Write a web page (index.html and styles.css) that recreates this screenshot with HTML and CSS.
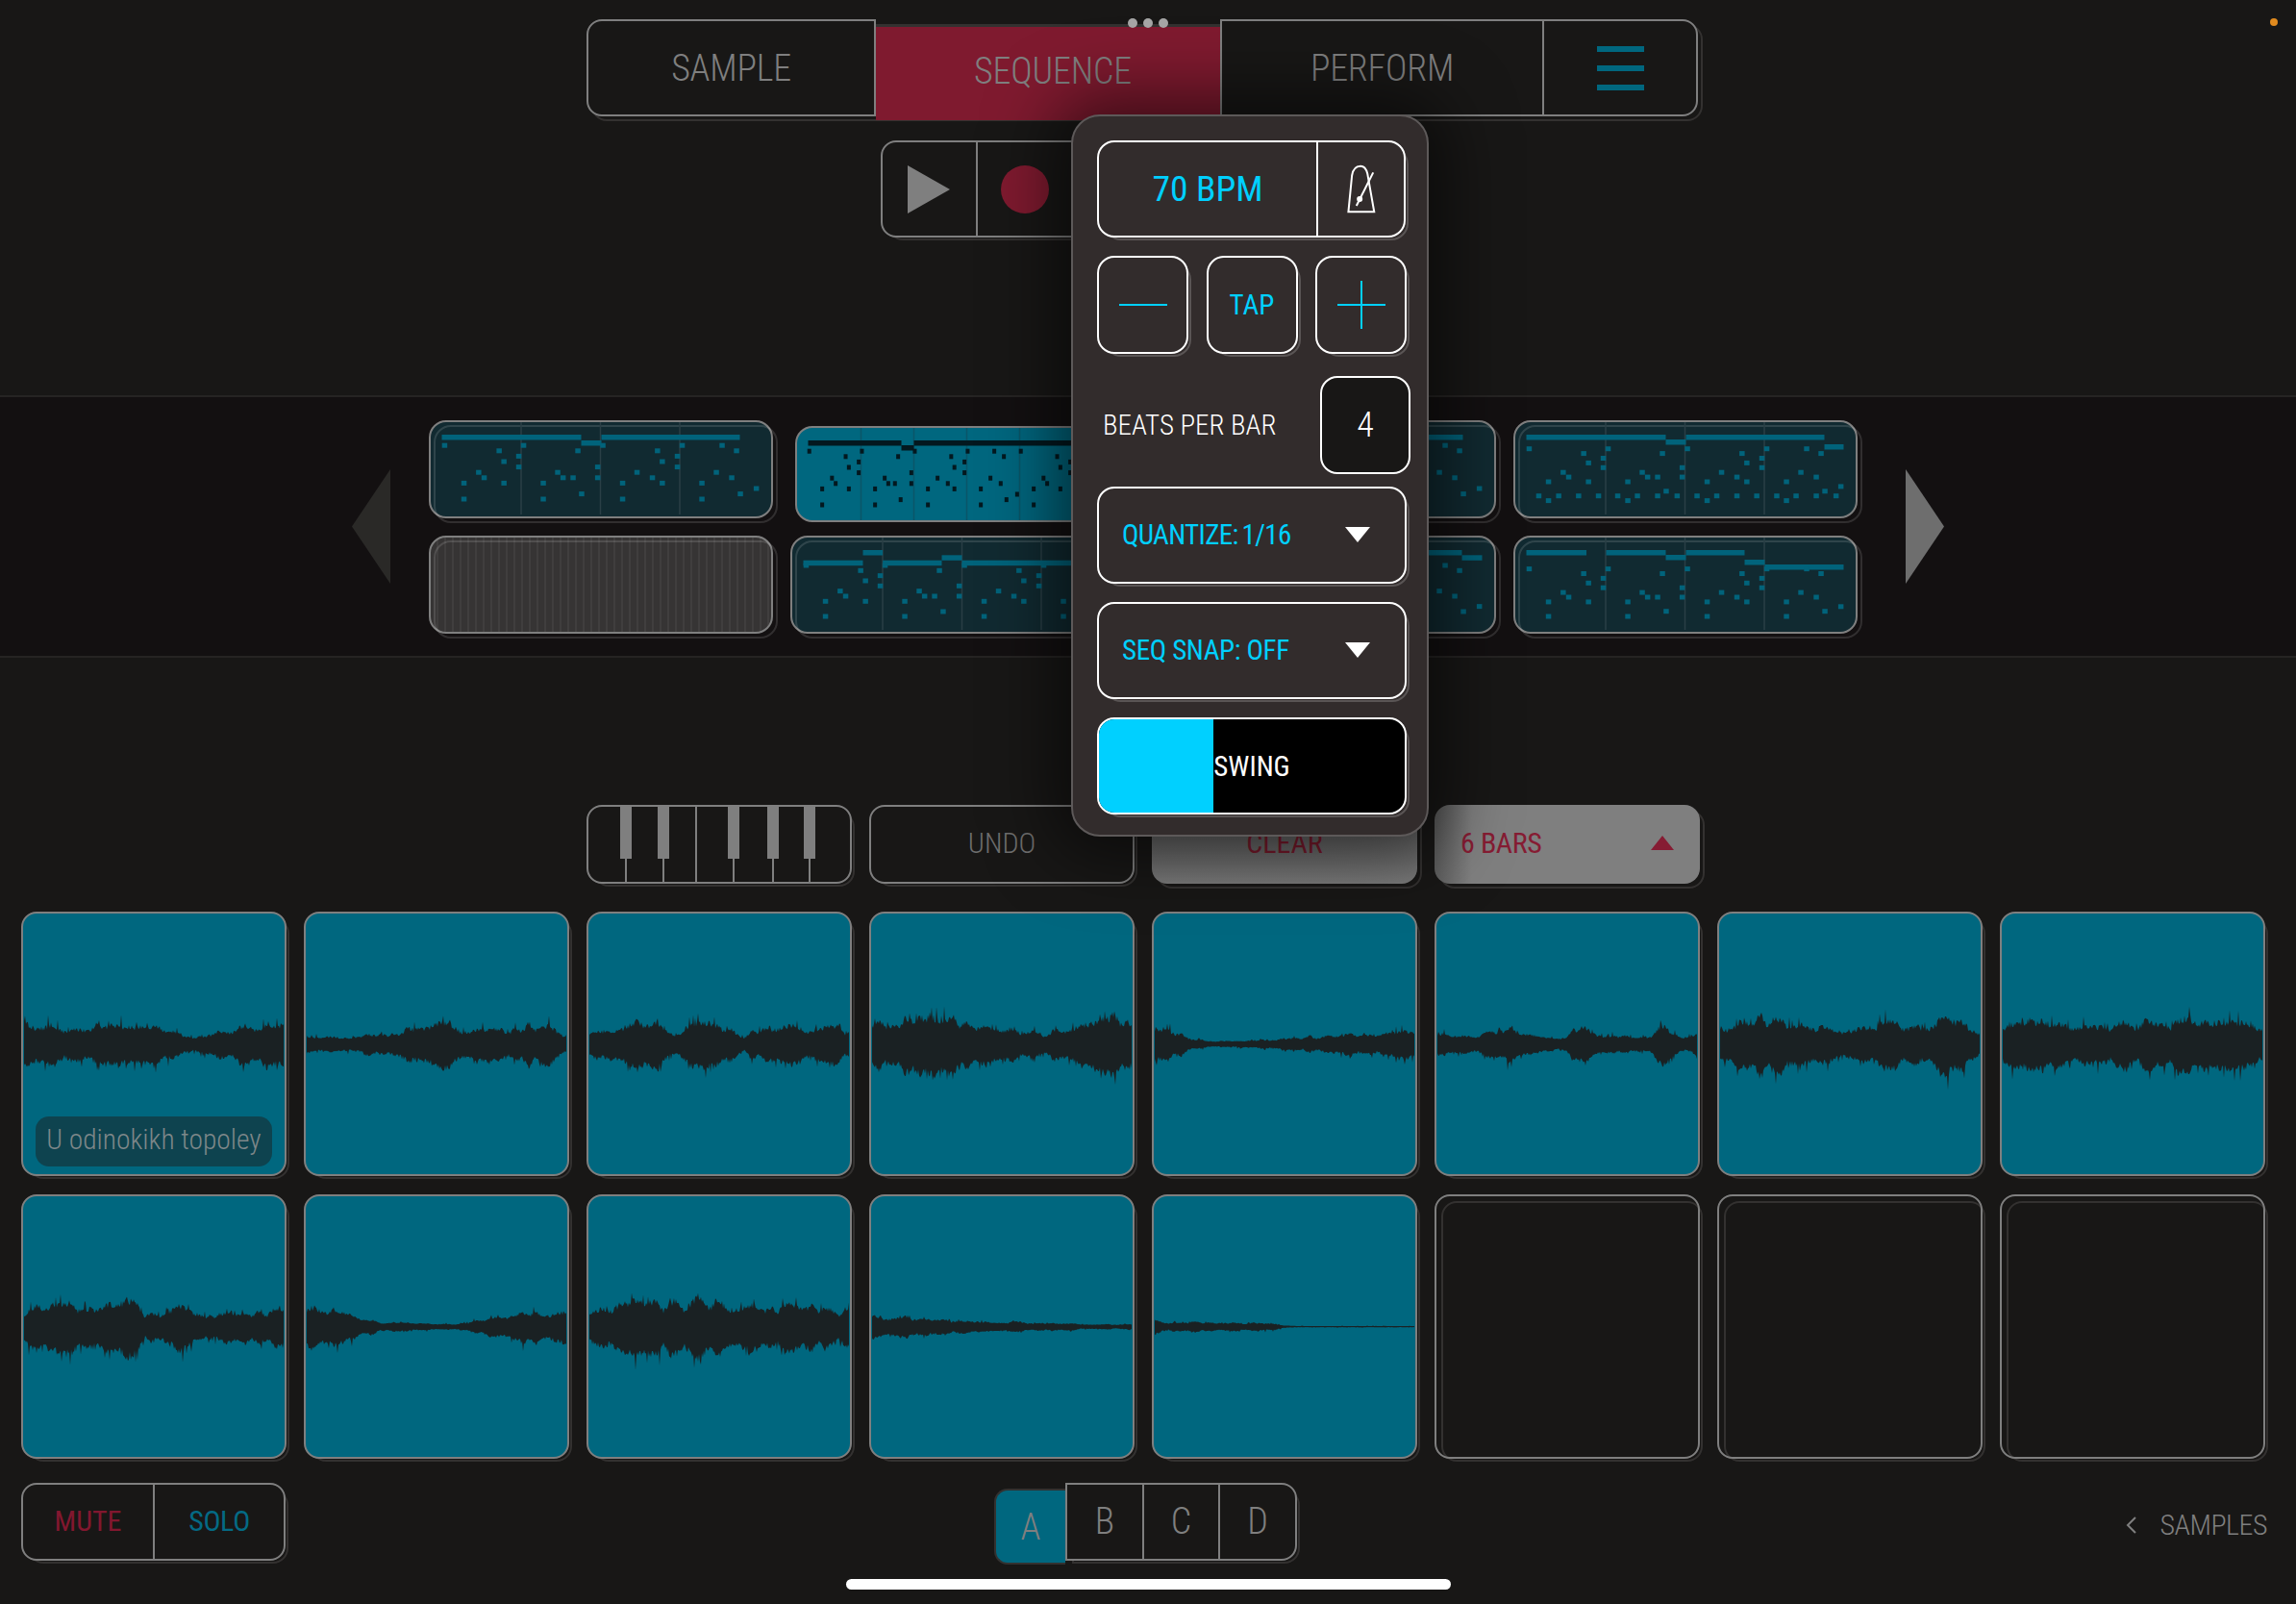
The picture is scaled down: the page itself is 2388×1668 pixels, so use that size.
FILE: index.html
```html
<!DOCTYPE html>
<html lang="en">
<head>
<meta charset="utf-8">
<title>Sequencer</title>
<link rel="stylesheet" href="styles.css">
</head>
<body>
<div class="app">
  <nav class="tabs ring">
    <div class="tab tab-first"><span class="txt">SAMPLE</span></div>
    <div class="tab tab-active"><span class="txt">SEQUENCE</span></div>
    <div class="tab tab-perform"><span class="txt">PERFORM</span></div>
    <div class="tab tab-menu"><i class="burger"></i><i class="burger"></i><i class="burger"></i></div>
  </nav>

  <div class="transport ring">
    <div class="transport-cell">
      <svg class="play" viewBox="0 0 44 50"><polygon points="0,0 44,25 0,50"/></svg>
    </div>
    <div class="transport-cell transport-rec"><i class="rec"></i></div>
  </div>

  <section class="strip">
    <svg class="arrow arrow-left" viewBox="0 0 40 119"><polygon points="40,0 0,59.5 40,119"/></svg>
    <div class="tiles">
      <div class="tile" data-tile="a"></div>
      <div class="tile tile-selected" data-tile="selected"></div>
      <div class="tile" data-tile="a"></div>
      <div class="tile" data-tile="d"></div>
      <div class="tile tile-blank"></div>
      <div class="tile" data-tile="e"></div>
      <div class="tile" data-tile="f"></div>
      <div class="tile" data-tile="g"></div>
    </div>
    <svg class="arrow arrow-right" viewBox="0 0 40 119"><polygon points="0,0 40,59.5 0,119"/></svg>
  </section>

  <div class="controls">
    <div class="ctl piano ring">
      <i class="wkey"></i><i class="wkey"></i><i class="wkey"></i><i class="wkey"></i><i class="wkey"></i><i class="wkey"></i><i class="wkey"></i>
      <i class="bkey k1"></i><i class="bkey k2"></i><i class="bkey k3"></i><i class="bkey k4"></i><i class="bkey k5"></i>
    </div>
    <div class="ctl ctl-undo ring"><span class="txt">UNDO</span></div>
    <div class="ctl ctl-lit ctl-clear ring"><span class="txt">CLEAR</span></div>
    <div class="ctl ctl-lit ctl-bars ring"><span class="txt">6 BARS</span><i class="tri-up"></i></div>
  </div>

  <div class="pads">
    <div class="pad ring" data-wave="0"><div class="pad-label"><span class="txt">U odinokikh topoley</span></div></div>
    <div class="pad ring" data-wave="1"></div>
    <div class="pad ring" data-wave="2"></div>
    <div class="pad ring" data-wave="3"></div>
    <div class="pad ring" data-wave="4"></div>
    <div class="pad ring" data-wave="5"></div>
    <div class="pad ring" data-wave="6"></div>
    <div class="pad ring" data-wave="7"></div>
    <div class="pad ring" data-wave="8"></div>
    <div class="pad ring" data-wave="9"></div>
    <div class="pad ring" data-wave="10"></div>
    <div class="pad ring" data-wave="11"></div>
    <div class="pad ring" data-wave="12"></div>
    <div class="pad pad-empty ring"></div>
    <div class="pad pad-empty ring"></div>
    <div class="pad pad-empty ring"></div>
  </div>

  <div class="footer">
    <div class="mutesolo ring">
      <div class="ms ms-mute"><span class="txt">MUTE</span></div>
      <div class="ms ms-solo"><span class="txt">SOLO</span></div>
    </div>
    <div class="banks">
      <div class="bank-a"><span class="txt">A</span></div>
      <div class="bank-group ring">
        <div class="bank"><span class="txt">B</span></div>
        <div class="bank"><span class="txt">C</span></div>
        <div class="bank"><span class="txt">D</span></div>
      </div>
    </div>
    <div class="samples">
      <svg class="chev" viewBox="0 0 12 18"><polyline points="10,1 2,9 10,17"/></svg>
      <span class="txt">SAMPLES</span>
    </div>
  </div>

  <div class="popover">
    <div class="bpm ring">
      <div class="bpm-value"><span class="txt">70 BPM</span></div>
      <div class="bpm-icon">
        <svg class="metro" viewBox="0 0 95 155">
          <path d="M7 147 L18 35 Q22 5 45 5 Q60 5 66 28 L87 147 Z"/>
          <line x1="32" y1="128" x2="84" y2="25"/>
          <circle cx="42" cy="107" r="9"/>
        </svg>
      </div>
    </div>
    <div class="steppers">
      <div class="pbtn ring"><i class="bar-h"></i></div>
      <div class="pbtn ring"><span class="txt tap">TAP</span></div>
      <div class="pbtn ring"><i class="bar-h"></i><i class="bar-v"></i></div>
    </div>
    <div class="beats">
      <span class="txt beats-label">BEATS PER BAR</span>
      <div class="beats-value"><span class="txt">4</span></div>
    </div>
    <div class="select ring"><span class="txt sel-quant">QUANTIZE: 1/16</span><i class="tri-down"></i></div>
    <div class="select ring"><span class="txt sel-snap">SEQ SNAP: OFF</span><i class="tri-down"></i></div>
    <div class="swing ring">
      <div class="swing-fill" style="width:37.5%"></div>
      <span class="txt swing-label">SWING</span>
    </div>
  </div>

  <div class="dots"><i></i><i></i><i></i></div>
  <i class="status-dot"></i>
  <div class="home"></div>
</div>
<script src="script.js"></script>
</body>
</html>
```
FILE: styles.css
```css
* { box-sizing: border-box; }
html, body { margin: 0; padding: 0; background: #181716; }
i { display: block; }

.app {
  --grey: #7f7f7f;
  --teal: #00677f;
  --wine: #7f1a2f;
  position: relative;
  isolation: isolate;
  width: 2388px;
  height: 1668px;
  overflow: hidden;
  background: #181716;
  color: var(--grey);
  font-family: Roboto, "Liberation Sans", sans-serif;
  font-weight: 300;
}
.txt { display: inline-block; font-stretch: 75%; white-space: nowrap; }

/* offset outline that sits behind most controls */
.ring { position: relative; }
.ring::before {
  content: "";
  position: absolute;
  inset: 5px -5px -5px 5px;
  border: 2px solid #333130;
  border-radius: inherit;
  z-index: -1;
}

/* top tabs */
.tabs {
  display: flex;
  width: 1156px;
  height: 101px;
  margin: 20px 0 0 610px;
  border-radius: 16px;
  font-size: 38px;
  letter-spacing: -0.2px;
}
.tab {
  display: flex;
  align-items: center;
  justify-content: center;
  background: #181716;
  border: 2px solid var(--grey);
}
.tab-first { width: 301px; border-radius: 16px 0 0 16px; }
.tab-active {
  width: 358px;
  height: 99px;
  margin-top: 6px;
  background: var(--wine);
  border: 0;
  border-top: 2px solid #333130;
  padding: 0 0 6px 10px;
}
.tab-perform { width: 335px; border-right: 0; }
.tab-menu {
  flex: 1;
  flex-direction: column;
  gap: 14px;
  border-radius: 0 16px 16px 0;
}
.burger { width: 49px; height: 6px; background: var(--teal); }

/* transport */
.transport {
  display: flex;
  width: 240px;
  height: 101px;
  margin: 25px 0 0 916px;
  border: 2px solid var(--grey);
  border-radius: 16px;
  background: #181716;
}
.transport-cell {
  display: flex;
  align-items: center;
  width: 97px;
  padding-left: 26px;
}
.transport-rec { flex: 1; border-left: 2px solid var(--grey); padding-left: 24px; }
.play { width: 44px; height: 50px; fill: var(--grey); }
.rec { width: 50px; height: 50px; border-radius: 50%; background: var(--wine); }

/* pattern strip */
.strip {
  display: flex;
  align-items: center;
  height: 273px;
  margin-top: 164px;
  padding-left: 366px;
  background: #131011;
  border-top: 2px solid #262423;
  border-bottom: 2px solid #262423;
}
.arrow { width: 40px; height: 119px; flex: none; }
.arrow-left { fill: #2a2927; }
.arrow-right { fill: #6e6e6e; margin-left: 50px; }
.tiles {
  display: grid;
  grid-template-columns: repeat(4, 358px);
  grid-auto-rows: 102px;
  column-gap: 18px;
  row-gap: 18px;
  margin-left: 40px;
}
.tile {
  position: relative;
  z-index: 0;
  border: 2.5px solid var(--grey);
  border-radius: 18px;
  background: #112a31;
}
.tile::before {
  content: "";
  position: absolute;
  inset: 3px -7px -7px 3px;
  border: 2px solid rgba(255,255,255,.13);
  border-radius: 18px;
  z-index: -1;
}
.tile svg { position: absolute; left: -2.5px; top: -2.5px; width: 357px; height: 102px; }
.tile-selected { margin: 6px -5px -6px 5px; background: var(--teal); height: 100px; }
.tile-selected::before { display: none; }
.tile-blank {
  background: repeating-linear-gradient(90deg, #363434 0 6.5px, #403e3e 6.5px 8px);
}

/* controls row */
.controls {
  display: grid;
  grid-template-columns: repeat(4, 276px);
  column-gap: 18px;
  height: 82px;
  margin: 153px 0 0 610px;
}
.ctl {
  display: flex;
  align-items: center;
  justify-content: center;
  padding-bottom: 3px;
  border: 2px solid var(--grey);
  border-radius: 16px;
  background: #181716;
  font-size: 30px;
}
.ctl-undo { color: #6e6e6e; }
.ctl-lit { border: 0; }
.ctl-clear {
  background: linear-gradient(180deg, #585858, #7a7a7a);
  color: #7a1a2c;
  font-weight: 400;
}
.ctl-bars {
  justify-content: space-between;
  padding: 0 27px 3px;
  background: linear-gradient(90deg, #5c5c5c, #7f7f7f 14%);
  color: #861c33;
  font-weight: 400;
  letter-spacing: -0.4px;
}
.tri-up {
  width: 0; height: 0;
  border-left: 12px solid transparent;
  border-right: 12px solid transparent;
  border-bottom: 15px solid #861c33;
}
.piano { justify-content: flex-start; align-items: stretch; padding-bottom: 0; }
.wkey { flex: none; width: 39.5px; border-left: 2px solid var(--grey); }
.wkey:nth-child(1) { width: 38px; border-left: 0; }
.wkey:nth-child(2) { width: 38.5px; }
.wkey:nth-child(3) { width: 34px; }
.wkey:nth-child(5) { width: 41px; }
.wkey:nth-child(6) { width: 38px; }
.bkey { position: absolute; top: 0; width: 12px; height: 54px; background: var(--grey); }
.k1 { left: 33px; } .k2 { left: 71.5px; } .k3 { left: 145px; } .k4 { left: 186px; } .k5 { left: 224px; }

/* pads */
.pads {
  display: grid;
  grid-template-columns: repeat(8, 276px);
  grid-auto-rows: 275px;
  gap: 19px 18px;
  margin: 29px 0 0 22px;
}
.pad {
  border: 2px solid var(--grey);
  border-radius: 16px;
  background: var(--teal);
}
.pad svg { position: absolute; left: 1px; top: 0; width: 270px; height: 271px; fill: #1a2123; }
.pad-empty { background: transparent; }
.pad-label {
  position: absolute;
  left: 13px;
  bottom: 8px;
  width: 246px;
  height: 52px;
  display: flex;
  align-items: center;
  justify-content: center;
  padding-bottom: 5px;
  border-radius: 14px;
  background: #0e434f;
  color: #7d8789;
  font-size: 29.5px;
}

/* footer */
.footer {
  display: flex;
  align-items: flex-start;
  margin: 25px 30px 0 22px;
}
.mutesolo {
  display: flex;
  width: 275px;
  height: 81px;
  border: 2px solid var(--grey);
  border-radius: 16px;
  background: #181716;
  font-size: 30px;
}
.ms { flex: none; display: flex; align-items: center; justify-content: center; padding-bottom: 2px; font-weight: 400; }
.ms-mute { width: 135px; color: #82172f; }
.ms-solo { flex: 1; border-left: 2px solid var(--grey); color: #046a84; letter-spacing: -0.3px; }
.banks { display: flex; margin-left: 737px; font-size: 38px; }
.bank-a {
  display: flex;
  align-items: center;
  justify-content: center;
  width: 74px;
  height: 79px;
  margin-top: 6px;
  border: 2px solid #333130;
  border-right: 0;
  border-radius: 14px 0 0 14px;
  background: var(--teal);
}
.bank-group {
  display: flex;
  width: 241px;
  height: 81px;
  border: 2px solid var(--grey);
  border-radius: 0 16px 16px 0;
  background: #181716;
}
.bank { flex: 1; display: flex; align-items: center; justify-content: center; padding-bottom: 2px; }
.bank + .bank { border-left: 2px solid var(--grey); }
.samples {
  display: flex;
  align-items: center;
  gap: 24px;
  margin: 26px 0 0 auto;
  font-size: 30px;
  letter-spacing: -0.5px;
}
.chev { width: 12px; height: 18px; fill: none; stroke: var(--grey); stroke-width: 2; }

/* popover */
.popover {
  position: absolute;
  z-index: 10;
  left: 1114px;
  top: 119px;
  width: 372px;
  height: 751px;
  padding: 25px 0 0 25px;
  background: #322c2c;
  border: 2px solid #5d5959;
  border-radius: 30px;
  box-shadow: 0 0 70px 18px rgba(0,0,0,.55);
  color: #00d0ff;
  font-weight: 400;
}
.popover .ring::before { border-color: #5a5555; }
.bpm {
  display: flex;
  width: 321px;
  height: 101px;
  border: 2px solid #fff;
  border-radius: 18px;
  background: #322c2c;
}
.bpm-value {
  width: 226px;
  display: flex;
  align-items: center;
  justify-content: center;
  padding-bottom: 2px;
  font-size: 37.5px;
}
.bpm-icon {
  flex: 1;
  display: flex;
  align-items: center;
  justify-content: center;
  border-left: 2px solid #fff;
}
.metro { width: 32px; height: 52px; fill: none; stroke: #fff; stroke-width: 6; }
.metro circle { fill: #fff; stroke: none; }
.steppers {
  display: flex;
  gap: 18.5px;
  margin-top: 19px;
}
.pbtn {
  display: flex;
  align-items: center;
  justify-content: center;
  width: 95px;
  height: 102px;
  border: 2px solid #fff;
  border-radius: 18px;
  background: #322c2c;
}
.tap { font-size: 29px; }
.bar-h { width: 50px; height: 2px; background: #00d0ff; }
.bar-v { position: absolute; width: 2px; height: 50px; background: #00d0ff; }
.beats {
  display: flex;
  align-items: center;
  justify-content: space-between;
  width: 326px;
  height: 102px;
  margin-top: 23px;
  padding-left: 6px;
  color: #fff;
  font-size: 29px;
  font-weight: 350;
}
.beats-value {
  display: flex;
  align-items: center;
  justify-content: center;
  width: 94px;
  height: 102px;
  border: 2px solid #fff;
  border-radius: 18px;
  background: #181716;
  font-size: 36px;
}
.select {
  display: flex;
  align-items: center;
  justify-content: space-between;
  width: 322px;
  height: 101px;
  margin-top: 13px;
  padding: 0 36px 2px 24px;
  border: 2px solid #fff;
  border-radius: 18px;
  background: #322c2c;
  font-size: 29px;
}
.select + .select { margin-top: 19px; }
.sel-quant { letter-spacing: -0.65px; word-spacing: -2px; }
.sel-snap { letter-spacing: -0.35px; }
.tri-down {
  width: 0; height: 0;
  border-left: 13px solid transparent;
  border-right: 13px solid transparent;
  border-top: 16px solid #fff;
}
.swing {
  display: flex;
  align-items: center;
  justify-content: center;
  width: 322px;
  height: 101px;
  margin-top: 19px;
  border: 2px solid #fff;
  border-radius: 18px;
  background: #000;
  color: #fff;
  font-size: 29px;
}
.swing-fill {
  position: absolute;
  left: 0;
  top: 0;
  bottom: 0;
  background: #00d0ff;
  border-radius: 16px 0 0 16px;
}
.swing-label { position: relative; }

/* overlays */
.dots {
  position: absolute;
  z-index: 11;
  left: 1173px;
  top: 19px;
  display: flex;
  gap: 6px;
}
.dots i { width: 10px; height: 10px; border-radius: 50%; background: #a5a5a5; }
.status-dot {
  position: absolute;
  left: 2361px;
  top: 19px;
  width: 8px;
  height: 8px;
  border-radius: 50%;
  background: #e08a1e;
}
.home {
  position: absolute;
  left: 880px;
  top: 1642px;
  width: 629px;
  height: 11px;
  border-radius: 6px;
  background: #fff;
}
```
FILE: script.js
```js
// Notes of the four-bar phrase shared by all patterns: [offset in bar, pitch row]
var BARS = [
  [[2.9,3],[23,10],[23,14],[12.9,13],[33.6,13],[38.3,8],[44,9],[59.6,4],[64.6,6],[64.6,10],[80,5],[80,7],[54.3,13],[75,13]],
  [[2.5,3],[23,10],[23,14],[12.5,13],[33,13],[38,8],[43.6,9],[54,9],[59,4],[79.6,9],[79.6,7],[62.9,12],[54,13],[74.3,13]],
  [[2.5,3],[23,10],[23,14],[12.5,13],[33,13],[38,8],[54,9],[59.3,4],[64.3,6],[64.3,10],[80,5],[80,7],[54,13],[74.6,13]],
  [[2.5,3],[23,10],[23,14],[12.9,13],[33,13],[38,8],[54,9],[44,3],[59,4],[54,13],[74.6,13],[63,12],[79.6,11]]
];
var NS = "http://www.w3.org/2000/svg";

function rowsA(k) { return k === 14 ? 83 : 16 + 5.6 * (k - 1); }
function rowsE(k) { return k === 14 ? 85 : 16 + 5.33 * k; }
function rowsD(k) { return 16 + 4.9 * k; }
function rowsG(k) { return k === 14 ? 85 : 16 + 4.9 * (k + 1); }

var TILES = {
  a: { y: rowsA, melody: [[0,145,16],[145,166,22],[166,310,16]] },
  selected: { y: rowsA, bars: 6, note: "#03181f", grid: "#0b5568",
    melody: [[0,97,16],[97,110,21],[110,330,16]] },
  d: { y: rowsD, low: true, melody: [[0,145,16],[145,166,21],[166,310,16],[310,330,26]] },
  e: { y: rowsE, melody: [[0,62,26.7],[62,82.6,16],[82.6,144,26.7],[144,165,21.3],[165,330,26.7]] },
  f: { y: rowsE, melody: [[0,309,16],[309,330,21.3]] },
  g: { y: rowsG, melody: [[0,62.5,16],[83,145,16],[145,166,21],[166,227,16],[227,248,26],[248,330,31]] }
};

function rect(svg, x, y, w, h, fill) {
  var r = document.createElementNS(NS, "rect");
  r.setAttribute("x", x); r.setAttribute("y", y);
  r.setAttribute("width", w); r.setAttribute("height", h);
  r.setAttribute("fill", fill);
  svg.appendChild(r);
}

document.querySelectorAll("[data-tile]").forEach(function (el) {
  var t = TILES[el.dataset.tile];
  var svg = document.createElementNS(NS, "svg");
  svg.setAttribute("viewBox", "0 0 357 102");
  var bars = t.bars || 4, bw = 330 / bars, sx = bw / 82.5;
  var noteC = t.note || "#01637b", gridC = t.grid || "#2a3f46", ox = 13.5;
  for (var g = 1; g < bars; g++) rect(svg, ox + g * bw - 0.75, 3, 1.5, 96, gridC);
  t.melody.forEach(function (m) { rect(svg, ox + m[0], m[2], m[1] - m[0], 5.5, noteC); });
  for (var b = 0; b < bars; b++) {
    BARS[b % 4].forEach(function (n) {
      if (n[1] === 13 && !t.low) return;
      rect(svg, ox + b * bw + n[0] * sx - 2.7, t.y(n[1]) - 2.5, t.bars ? 4 : 5.5, 5, noteC);
    });
  }
  el.appendChild(svg);
});

// Waveform envelopes, in pixels above the centre line
var ENV = [
  [21,14,16,15,14,13,17,16,21,19,18,14,9,5,7,12,14,15,16,19,17],
  [8,5,7,6,9,7,11,14,17,17,17,14,14,13,13,15,18,16,7],
  [10,12,15,20,18,8,18,18,14,8,16,18,14,14,16,10],
  [14,22,24,20,24,22,14,16,14,12,10,13,18,20,24,16],
  [16,12,6,3,2.5,2.5,3,4,5,6,7,9,9,10,12,10],
  [12,8,7,8,10,9,18,8,7,6,5,7,16,11,8,9,8,6,5,16,12,6,10],
  [12,18,25,22,18,16,13,14,14,16,18,18,20,26,18,10],
  [12,20,20,18,17,18,18,18,19,19,20,19,18,18,18,12],
  [12,20,24,23,14,24,24,12,10,17,17,8,15,14,12,16],
  [17,14,12,7,4,3,3,2.5,2,5,8,9,12,13,14],
  [10,17,22,24,20,23,25,22,16,18,19,18,18,14,16],
  [9,9,8,7,5,4,4,4,3,3,2,2,2],
  [7,4,3,4,4,3,4,3,3,3,1,.6,.6,.6,.6,.6,.6,.6,.6,.6,.6]
];

function mulberry(a) {
  return function () {
    a |= 0; a = a + 0x6D2B79F5 | 0;
    var t = Math.imul(a ^ a >>> 15, 1 | a);
    t = t + Math.imul(t ^ t >>> 7, 61 | t) ^ t;
    return ((t ^ t >>> 14) >>> 0) / 4294967296;
  };
}

document.querySelectorAll("[data-wave]").forEach(function (pad) {
  var i = +pad.dataset.wave, env = ENV[i], rnd = mulberry(i * 97 + 11);
  var W = 270, cy = 135.5, top = [], bot = [];
  var bumps = [], step = 7;
  for (var b = 0; b <= W / step + 1; b++) bumps.push(0.72 + rnd() * 0.6);
  for (var x = 0; x <= W; x++) {
    var p = x / W * (env.length - 1), k = Math.min(Math.floor(p), env.length - 2), f = p - k;
    var a = env[k] * (1 - f) + env[k + 1] * f;
    var q = x / step, qi = Math.floor(q), qf = q - qi;
    var bump = bumps[qi] * (1 - qf) + bumps[qi + 1] * qf;
    var j1 = 0.84 + rnd() * 0.32, j2 = 0.84 + rnd() * 0.32;
    var s1 = rnd() < 0.09 ? 1.15 + rnd() * 0.35 : 1, s2 = rnd() < 0.09 ? 1.15 + rnd() * 0.35 : 1;
    var m = a < 2 ? 1 / (bump * j1) : 1;
    top.push(x + "," + (cy - Math.max(a * bump * j1 * s1 * m, 0.5)).toFixed(1));
    bot.unshift(x + "," + (cy + Math.max(a * bump * j2 * s2 * m * 1.15, 0.5)).toFixed(1));
  }
  var svg = document.createElementNS(NS, "svg");
  svg.setAttribute("viewBox", "0 0 270 271");
  var poly = document.createElementNS(NS, "polygon");
  poly.setAttribute("points", top.concat(bot).join(" "));
  svg.appendChild(poly);
  pad.insertBefore(svg, pad.firstChild);
});
```
